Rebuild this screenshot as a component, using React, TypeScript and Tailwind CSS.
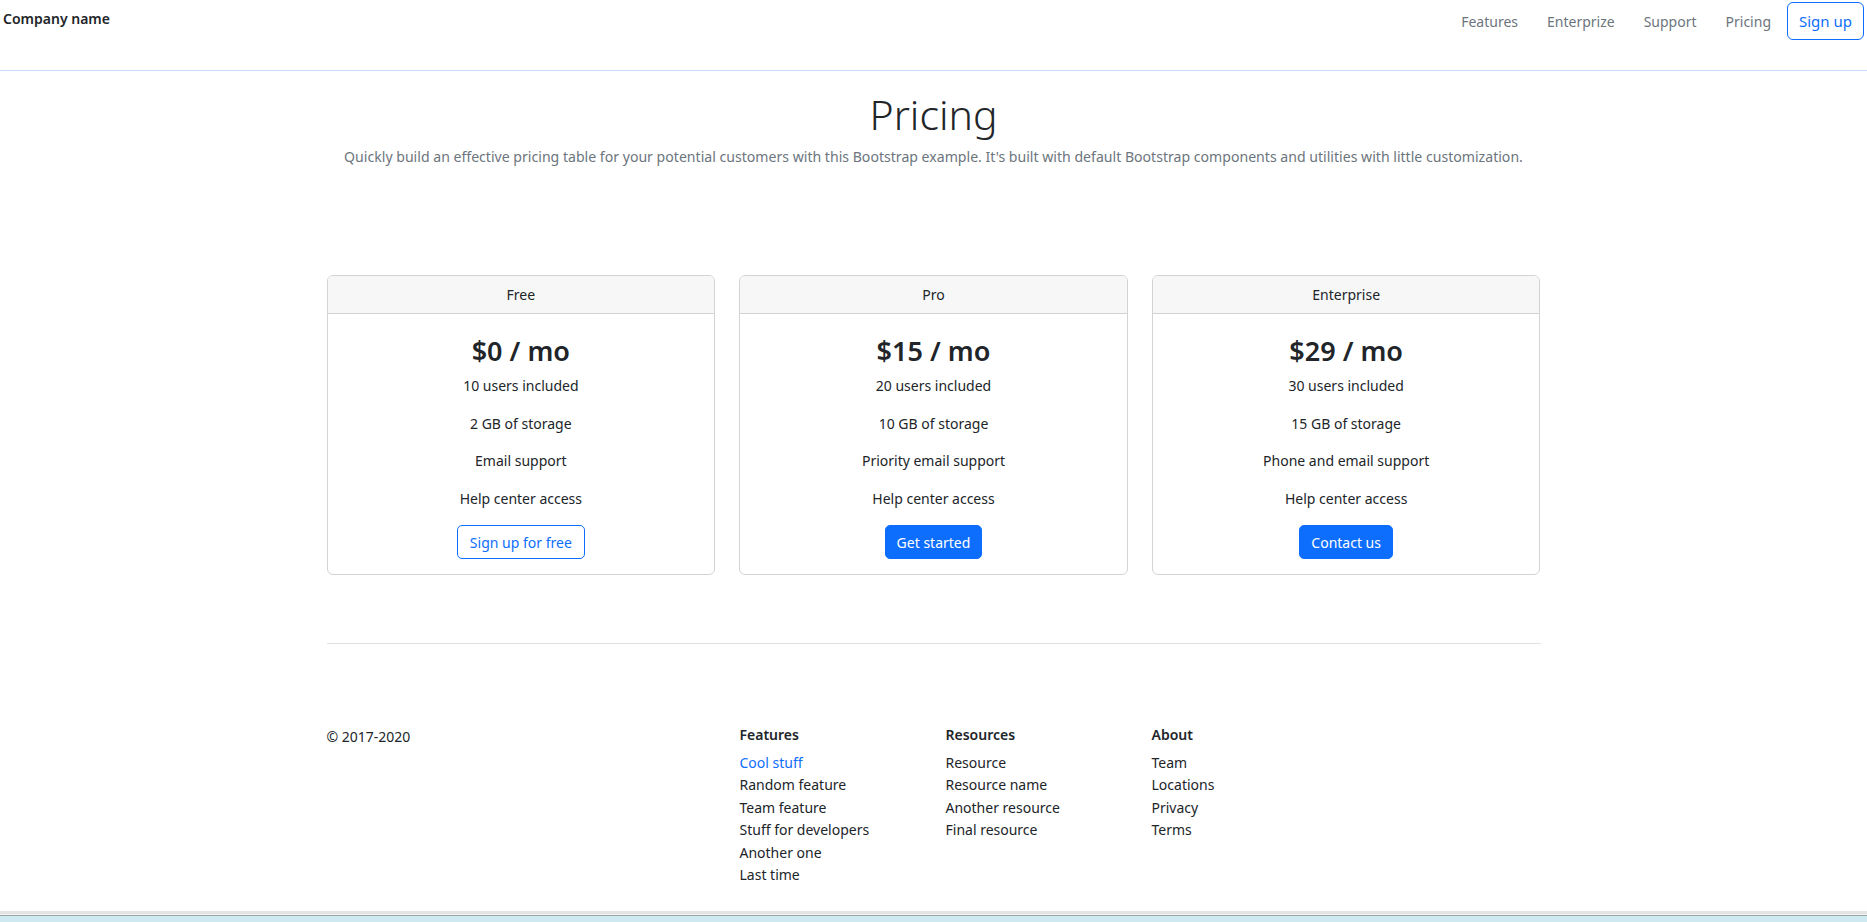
import React from "react";

interface Plan {
  name: string;
  price: string;
  features: string[];
  cta: string;
  outline?: boolean;
}

const plans: Plan[] = [
  {
    name: "Free",
    price: "$0",
    features: ["10 users included", "2 GB of storage", "Email support", "Help center access"],
    cta: "Sign up for free",
    outline: true,
  },
  {
    name: "Pro",
    price: "$15",
    features: ["20 users included", "10 GB of storage", "Priority email support", "Help center access"],
    cta: "Get started",
  },
  {
    name: "Enterprise",
    price: "$29",
    features: ["30 users included", "15 GB of storage", "Phone and email support", "Help center access"],
    cta: "Contact us",
  },
];

const footerCols = [
  {
    title: "Features",
    links: ["Cool stuff", "Random feature", "Team feature", "Stuff for developers", "Another one", "Last time"],
  },
  {
    title: "Resources",
    links: ["Resource", "Resource name", "Another resource", "Final resource"],
  },
  {
    title: "About",
    links: ["Team", "Locations", "Privacy", "Terms"],
  },
];

const PlanCard = ({ plan }: { plan: Plan }) => {
  return (
    <div className="flex flex-col rounded-[6px] border border-[#d3d3d3] overflow-hidden">
      <div className="h-[38px] flex items-center justify-center bg-[#f7f7f7] border-b border-[#d3d3d3] text-[14px]">
        {plan.name}
      </div>
      <div className="flex flex-col items-center pt-[18px] pb-[15px]">
        <div className="text-[27px] leading-[37px] font-semibold text-[#212529]">
          {plan.price} / mo
        </div>
        <ul className="flex flex-col items-center gap-[15px] mt-[6px] text-[14px] leading-[22.5px]">
          {plan.features.map((f, i) => (
            <li key={i}>{f}</li>
          ))}
        </ul>
        {plan.outline ? (
          <button className="mt-[15px] h-[34px] px-[12px] rounded-[5px] border border-[#0d6efd] text-[#0d6efd] text-[14px] bg-white">
            {plan.cta}
          </button>
        ) : (
          <button className="mt-[15px] h-[34px] px-[11px] rounded-[5px] border border-[#0d6efd] bg-[#0d6efd] text-white text-[14px]">
            {plan.cta}
          </button>
        )}
      </div>
    </div>
  );
};

export default function App() {
  return (
    <div className="min-h-screen flex flex-col bg-white text-[#212529] font-['Segoe_UI','Noto_Sans',sans-serif]">
      <header className="h-[71px] shrink-0 flex justify-between border-b border-[#c7ddfb]">
        <div className="pl-[3px] pt-[8px] text-[14px] font-semibold">Company name</div>
        <nav className="flex items-start pt-[2px] pr-[3px] text-[14px]">
          <a className="h-[38px] flex items-center px-[8px] mr-[13px] text-[#6c757d]">Features</a>
          <a className="h-[38px] flex items-center px-[8px] mr-[13px] text-[#6c757d]">Enterprize</a>
          <a className="h-[38px] flex items-center px-[8px] mr-[13px] text-[#6c757d]">Support</a>
          <a className="h-[38px] flex items-center px-[8px] text-[#6c757d]">Pricing</a>
          <a className="h-[38px] flex items-center px-[11px] ml-[8px] rounded-[6px] border border-[#0d6efd] text-[#0d6efd] text-[15px]">
            Sign up
          </a>
        </nav>
      </header>

      <main className="w-[1214px] mx-auto">
        <div className="text-center pt-[16px]">
          <h1 className="text-[41px] leading-[55px] font-light text-[#212529]">Pricing</h1>
          <p className="mt-[3px] text-[14.1px] leading-[24px] text-[#6c757d]">
            Quickly build an effective pricing table for your potential customers with this Bootstrap example. It's built with default Bootstrap components and utilities with little customization.
          </p>
        </div>

        <div className="grid grid-cols-3 gap-[24px] mt-[106px]">
          {plans.map((p) => (
            <PlanCard key={p.name} plan={p} />
          ))}
        </div>

        <footer className="mt-[68px] border-t border-[#dee2e6] pt-[80px] pb-[20px]">
          <div className="grid grid-cols-[413px_206px_206px_206px] text-[14px]">
            <div className="pt-[2px]">© 2017-2020</div>
            {footerCols.map((col) => (
              <div key={col.title}>
                <h5 className="font-semibold leading-[22px] mb-[6px]">{col.title}</h5>
                <ul className="leading-[22.4px]">
                  {col.links.map((l, i) => (
                    <li key={l} className={col.title === "Features" && i === 0 ? "text-[#0d6efd]" : "text-[#212529]"}>
                      {l}
                    </li>
                  ))}
                </ul>
              </div>
            ))}
          </div>
        </footer>
      </main>

      <div className="mt-auto">
        <div className="h-[3px] bg-[#e4e4e4]" />
        <div className="h-[1px] bg-[#f2f2f2]" />
        <div className="h-[1px] bg-[#9aa5a8]" />
        <div className="h-[6px] bg-[#cfe9f1]" />
      </div>
    </div>
  );
}
